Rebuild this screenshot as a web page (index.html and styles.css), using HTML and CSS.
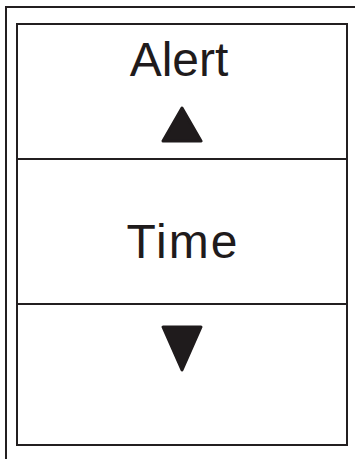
FILE: index.html
```html
<!DOCTYPE html>
<html>
<head>
<meta charset="utf-8">
<link rel="stylesheet" href="styles.css">
</head>
<body>
<div class="frame">
  <div class="panel">
    <div class="sec sec-top">
      <div class="label label-alert">Alert</div>
      <svg class="tri tri-up" width="42" height="37" viewBox="0 0 42 37"><polygon points="21,2 40,35 2,35" /></svg>
    </div>
    <div class="sec sec-mid">
      <div class="label label-wide">Time</div>
    </div>
    <div class="sec sec-bot">
      <svg class="tri tri-down" width="42" height="47" viewBox="0 0 42 47"><polygon points="2,2 40,2 21,45" /></svg>
    </div>
  </div>
</div>
</body>
</html>
```
FILE: styles.css
```css
html, body {
  margin: 0;
  padding: 0;
  background: #fff;
  overflow: hidden;
}
body {
  width: 355px;
  height: 459px;
  font-family: "Liberation Sans", Arial, sans-serif;
  color: #1f1b1c;
}
.frame {
  margin: 6px 0 0 5px;
  border-top: 2px solid #231f20;
  border-left: 2px solid #231f20;
  padding: 15px 0 0 9px;
  height: 453px;
  width: 350px;
  box-sizing: border-box;
}
.panel {
  width: 332px;
  border: 2px solid #231f20;
  box-sizing: border-box;
  display: flex;
  flex-direction: column;
}
.sec {
  display: flex;
  flex-direction: column;
  align-items: center;
  box-sizing: border-box;
}
.sec-top {
  height: 135px;
  padding-top: 11px;
  border-bottom: 2px solid #231f20;
}
.sec-mid {
  height: 145px;
  padding-top: 58px;
  border-bottom: 2px solid #231f20;
}
.sec-bot {
  height: 139px;
  padding-top: 20px;
}
.label {
  font-size: 48px;
  line-height: 1;
}
.label-alert {
  margin-right: 6px;
}
.label-wide {
  letter-spacing: 2px;
  margin-left: 2px;
}
.tri {
  display: block;
}
.tri polygon {
  fill: #1f1b1c;
  stroke: #1f1b1c;
  stroke-width: 3;
  stroke-linejoin: round;
}
.tri-up {
  margin-top: 22px;
}
```
